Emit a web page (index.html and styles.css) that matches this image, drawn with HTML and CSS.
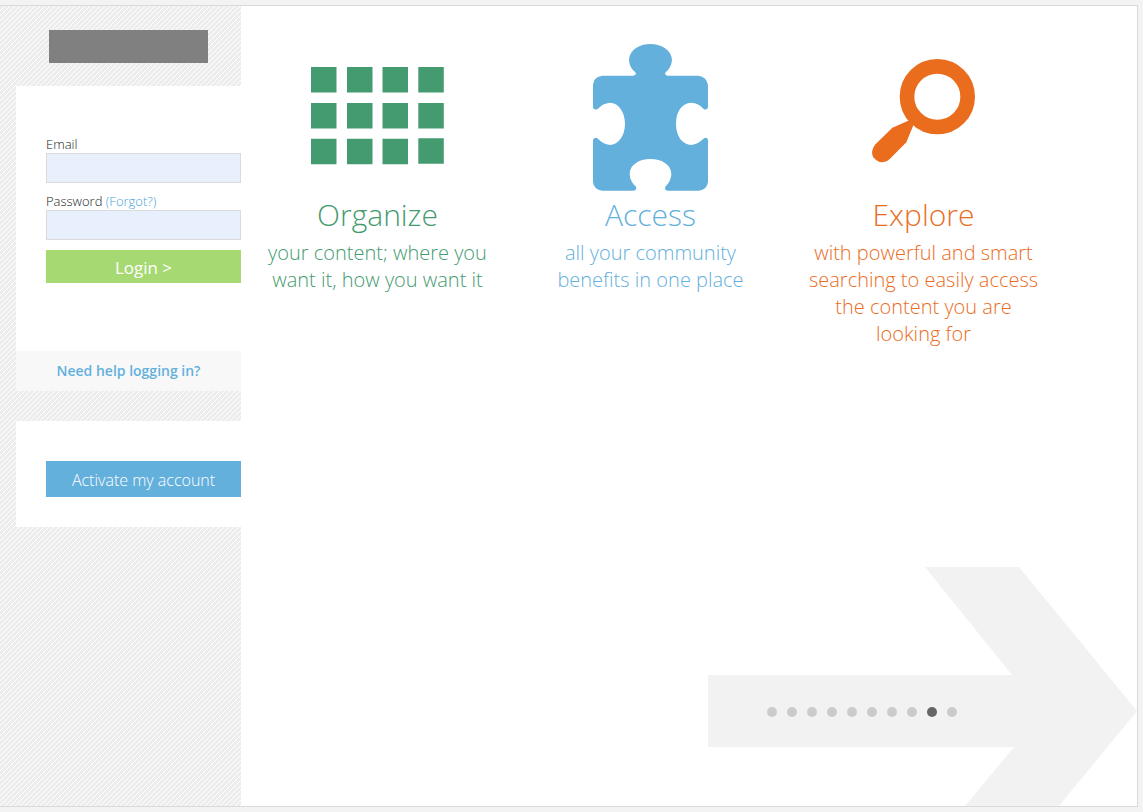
FILE: index.html
```html
<!DOCTYPE html>
<html lang="en">
<head>
<meta charset="utf-8">
<meta name="viewport" content="width=device-width, initial-scale=1">
<title>Login</title>
<link rel="stylesheet" href="styles.css">
</head>
<body>
<div class="frame">
  <aside class="sidebar">
    <div class="logo"></div>
    <section class="panel">
      <form class="login">
        <label for="email">Email</label>
        <input id="email" type="email">
        <div class="label-row"><label for="password">Password</label> <a href="#forgot">(Forgot?)</a></div>
        <input id="password" type="password">
        <button class="btn btn-login" type="button">Login &gt;</button>
      </form>
      <a class="help" href="#help">Need help logging in?</a>
    </section>
    <section class="panel panel-activate">
      <button class="btn btn-activate" type="button">Activate my account</button>
    </section>
  </aside>
  <main class="content">
    <div class="features">
      <section class="feature organize">
        <svg class="icon" viewBox="0 0 153 150" aria-hidden="true">
          <g fill="currentColor">
            <path d="M10 25h25.500v25.500h-25.500zM46 25h25.500v25.500h-25.500zM81.500 25h25.500v25.500h-25.500zM117.300 25h25.500v25.500h-25.500z"/>
            <path d="M10 61h25.500v25.500h-25.500zM46 61h25.500v25.500h-25.500zM81.500 61h25.500v25.500h-25.500zM117.300 61h25.500v25.500h-25.500z"/>
            <path d="M10 96.700h25.500v25.500h-25.500zM46 96.700h25.500v25.500h-25.500zM81.500 96.700h25.500v25.500h-25.500zM117.300 96.300h25.500v25.500h-25.500z"/>
          </g>
        </svg>
        <h2>Organize</h2>
        <p>your content; where you want it, how you want it</p>
      </section>
      <section class="feature access">
        <svg class="icon" viewBox="0 0 153 150" aria-hidden="true">
          <path fill="currentColor" transform="translate(-4 -12) scale(.33333)" d="M69 164Q71 140 97 137H190Q201 135 196 127Q178 112 177 90C178 60 208 42 241 42C276 42 305 62 306 90Q304 113 287 127Q282 136 293 137H385Q410 140 414 165V232Q410 243 400 236Q386 219 364 218C335 219 318 245 318 282C318 320 338 344 364 345Q385 342 400 326Q411 319 414 330V455Q412 479 386 482H293Q282 480 286 470Q304 452 304 432C304 405 276 387 241 387C207 387 179 405 179 432Q180 455 198 470Q202 480 190 482H97Q71 479 69 455V330Q74 319 84 326Q98 342 120 345C145 343 165 318 165 282C165 247 147 219 120 218Q98 220 84 236Q72 243 69 232Z"/>
        </svg>
        <h2>Access</h2>
        <p>all your community benefits in one place</p>
      </section>
      <section class="feature explore">
        <svg class="icon" viewBox="0 0 153 150" aria-hidden="true">
          <g transform="translate(13 8) scale(.33333)">
            <circle cx="232" cy="140" r="91" fill="none" stroke="currentColor" stroke-width="44"/>
            <path fill="currentColor" d="M148 211L97 233L45 284Q31 304 39 320Q52 339 72 336Q82 334 90 326L139 277L160 226Z"/>
          </g>
        </svg>
        <h2>Explore</h2>
        <p>with powerful and smart searching to easily access the content you are looking for</p>
      </section>
    </div>
    <div class="pager">
      <svg class="arrow" viewBox="0 0 429 239" aria-hidden="true"><path fill="#f2f2f2" d="M217 0H311L429 144L351 239H257L306 180H0V108H304Z"/></svg>
      <nav class="dots" aria-label="Slides">
        <button type="button" aria-label="Slide 1"></button>
        <button type="button" aria-label="Slide 2"></button>
        <button type="button" aria-label="Slide 3"></button>
        <button type="button" aria-label="Slide 4"></button>
        <button type="button" aria-label="Slide 5"></button>
        <button type="button" aria-label="Slide 6"></button>
        <button type="button" aria-label="Slide 7"></button>
        <button type="button" aria-label="Slide 8"></button>
        <button type="button" aria-label="Slide 9" class="current" aria-current="true"></button>
        <button type="button" aria-label="Slide 10"></button>
      </nav>
    </div>
  </main>
</div>
</body>
</html>
```

FILE: styles.css
```css
* { box-sizing: border-box; }

body {
  margin: 0;
  min-height: 100vh;
  padding: 5px 5px 5px 0;
  display: flex;
  background: #f3f3f3;
  font-family: "Open Sans", "Noto Sans", sans-serif;
}

a { color: #64b0dc; text-decoration: none; }

.frame {
  flex: 1;
  display: flex;
  background: #fff;
  border: 1px solid #dadada;
  border-left: 0;
}

.sidebar {
  flex: 0 0 241px;
  padding: 24px 0 0 16px;
  background: linear-gradient(135deg, #fff 10%, #ededed 10%, #ededed 50%, #fff 50%, #fff 60%, #ededed 60%) 0 0 / 5px 5px;
}

.logo {
  height: 33px;
  margin: 0 33px 23px;
  background: #808080;
}

.panel {
  margin-bottom: 30px;
  background: #fff;
}

.login {
  display: flex;
  flex-direction: column;
  padding: 50px 0 68px 30px;
  color: #222;
  font-size: 13px;
  font-weight: 300;
  line-height: 17px;
}

.login a { color: #4aa3d6; }

.login input {
  width: 100%;
  height: 30px;
  margin-bottom: 10px;
  padding: 0 6px;
  border: 1px solid #dadada;
  background: #e8f0fe;
  font: inherit;
}

.btn {
  width: 100%;
  padding: 2px 0 0;
  border: 0;
  color: #fff;
  font-family: inherit;
}

.btn-login { height: 33px; background: #a6d971; font-size: 17px; }

.help {
  display: block;
  background: #f8f8f8;
  font-size: 14px;
  font-weight: 600;
  line-height: 40px;
  text-align: center;
}

.panel-activate { padding: 40px 0 30px 30px; }

.btn-activate { display: block; height: 36px; background: #64b0dc; font-size: 16px; font-weight: 300; }

.content {
  flex: 1;
  display: flex;
  flex-direction: column;
  justify-content: space-between;
}

.features {
  display: grid;
  grid-template-columns: repeat(3, 1fr);
  padding: 36px 77px 0 0;
}

.feature {
  display: flex;
  flex-direction: column;
  align-items: center;
  padding: 0 20px;
  text-align: center;
}

.organize { color: #449b6f; }
.access { color: #64b0dc; }
.explore { color: #ea6d1e; }

.icon { width: 153px; height: 150px; }

.feature h2 {
  margin: 0 0 2px;
  font-size: 30px;
  font-weight: 300;
  line-height: 45px;
}

.feature p {
  margin: 0;
  font-size: 20px;
  font-weight: 300;
  line-height: 27px;
}

.pager { align-self: flex-end; display: grid; }

.arrow { grid-area: 1 / 1; width: 429px; height: 239px; }

.dots {
  grid-area: 1 / 1;
  display: flex;
  gap: 10px;
  padding: 140px 0 0 59px;
}

.dots button {
  width: 10px;
  height: 10px;
  padding: 0;
  border: 0;
  border-radius: 50%;
  background: #cbcbcb;
}

.dots .current { background: #666; }
```
